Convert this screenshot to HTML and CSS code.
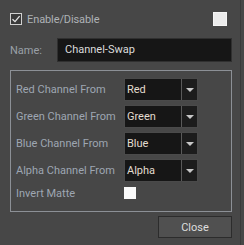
FILE: index.html
```html
<!DOCTYPE html>
<html>
<head>
<meta charset="utf-8">
<link rel="stylesheet" href="styles.css">
</head>
<body>
<div class="dialog">
  <div class="top-row">
    <label class="check-label">
      <span class="checkbox checked">
        <svg width="10" height="10" viewBox="0 0 10 10"><path d="M1.5 5.2 L4 7.6 L8.6 2.2" fill="none" stroke="#e6e6e6" stroke-width="1.3"/></svg>
      </span>
      <span class="enable-text">Enable/Disable</span>
    </label>
    <span class="swatch"></span>
  </div>
  <div class="name-row">
    <span class="name-label">Name:</span>
    <div class="text-input">Channel-Swap</div>
  </div>
  <div class="group">
    <div class="row">
      <span class="label">Red Channel From</span>
      <div class="combo"><span class="combo-value">Red</span><span class="combo-arrow"><span class="tri"></span></span></div>
    </div>
    <div class="row">
      <span class="label">Green Channel From</span>
      <div class="combo"><span class="combo-value">Green</span><span class="combo-arrow"><span class="tri"></span></span></div>
    </div>
    <div class="row">
      <span class="label">Blue Channel From</span>
      <div class="combo"><span class="combo-value">Blue</span><span class="combo-arrow"><span class="tri"></span></span></div>
    </div>
    <div class="row">
      <span class="label">Alpha Channel From</span>
      <div class="combo"><span class="combo-value">Alpha</span><span class="combo-arrow"><span class="tri"></span></span></div>
    </div>
    <div class="row small">
      <span class="label">Invert Matte</span>
      <span class="white-box"></span>
    </div>
  </div>
  <div class="footer">
    <button class="close-btn">Close</button>
  </div>
</div>
</body>
</html>
```

FILE: styles.css
```css
html, body {
  margin: 0;
  padding: 0;
  background: #474747;
}
body {
  font-family: Roboto, "Liberation Sans", sans-serif;
  font-size: 11px;
}
.dialog {
  width: 241px;
  height: 245px;
  box-sizing: border-box;
  padding: 12px 0 0 10px;
  border-right: 1px solid #3a3a3a;
  display: flex;
  flex-direction: column;
}
.top-row {
  width: 217px;
  height: 14px;
  display: flex;
  align-items: center;
  justify-content: space-between;
}
.check-label {
  display: flex;
  align-items: center;
  gap: 5px;
}
.checkbox {
  width: 12px;
  height: 12px;
  box-sizing: border-box;
  border: 1px solid #d0d0d0;
  background: #3a3a3a;
  display: flex;
  align-items: center;
  justify-content: center;
}
.enable-text {
  color: #aeb2b6;
  font-size: 11px;
  letter-spacing: -0.1px;
}
.swatch {
  width: 14px;
  height: 14px;
  box-sizing: border-box;
  background: #ececec;
  border: 1px solid #f6f6f6;
}
.name-row {
  margin-top: 12px;
  display: flex;
  align-items: center;
  width: 222px;
}
.name-label {
  width: 47px;
  color: #9aa0a8;
}
.text-input {
  width: 175px;
  height: 24px;
  box-sizing: border-box;
  background: #161616;
  border: 1px solid #303030;
  color: #dcdcdc;
  padding-left: 7px;
  line-height: 22px;
  font-size: 11px;
}
.group {
  margin-top: 8px;
  width: 222px;
  height: 142px;
  box-sizing: border-box;
  border: 1px solid #8c9096;
  padding: 7px 0 0 5px;
  display: flex;
  flex-direction: column;
  gap: 4px;
}
.row {
  display: flex;
  align-items: center;
  height: 23px;
}
.row.small {
  height: 14px;
}
.label {
  width: 108px;
  color: #9ea6b2;
  font-size: 11px;
}
.combo {
  width: 74px;
  height: 23px;
  box-sizing: border-box;
  border: 1px solid #4a4a4a;
  background: #161616;
  display: flex;
}
.combo-value {
  flex: 1;
  color: #e2dccf;
  padding-left: 2px;
  line-height: 21px;
  font-size: 11px;
}
.combo-arrow {
  width: 16px;
  box-sizing: border-box;
  border-left: 1px solid #5a5a5a;
  background: #1c1c1c;
  display: flex;
  align-items: center;
  justify-content: center;
}
.tri {
  width: 0;
  height: 0;
  border-left: 4px solid transparent;
  border-right: 4px solid transparent;
  border-top: 4px solid #c8c8c8;
}
.white-box {
  width: 12px;
  height: 12px;
  background: #fafafa;
}
.footer {
  margin-top: 4px;
  width: 222px;
  display: flex;
  justify-content: flex-end;
}
.close-btn {
  width: 74px;
  height: 22px;
  box-sizing: border-box;
  background: #505050;
  border: 1px solid #2c2c2c;
  color: #dedede;
  font-family: Roboto, "Liberation Sans", sans-serif;
  font-size: 11px;
  padding: 0;
}
```
